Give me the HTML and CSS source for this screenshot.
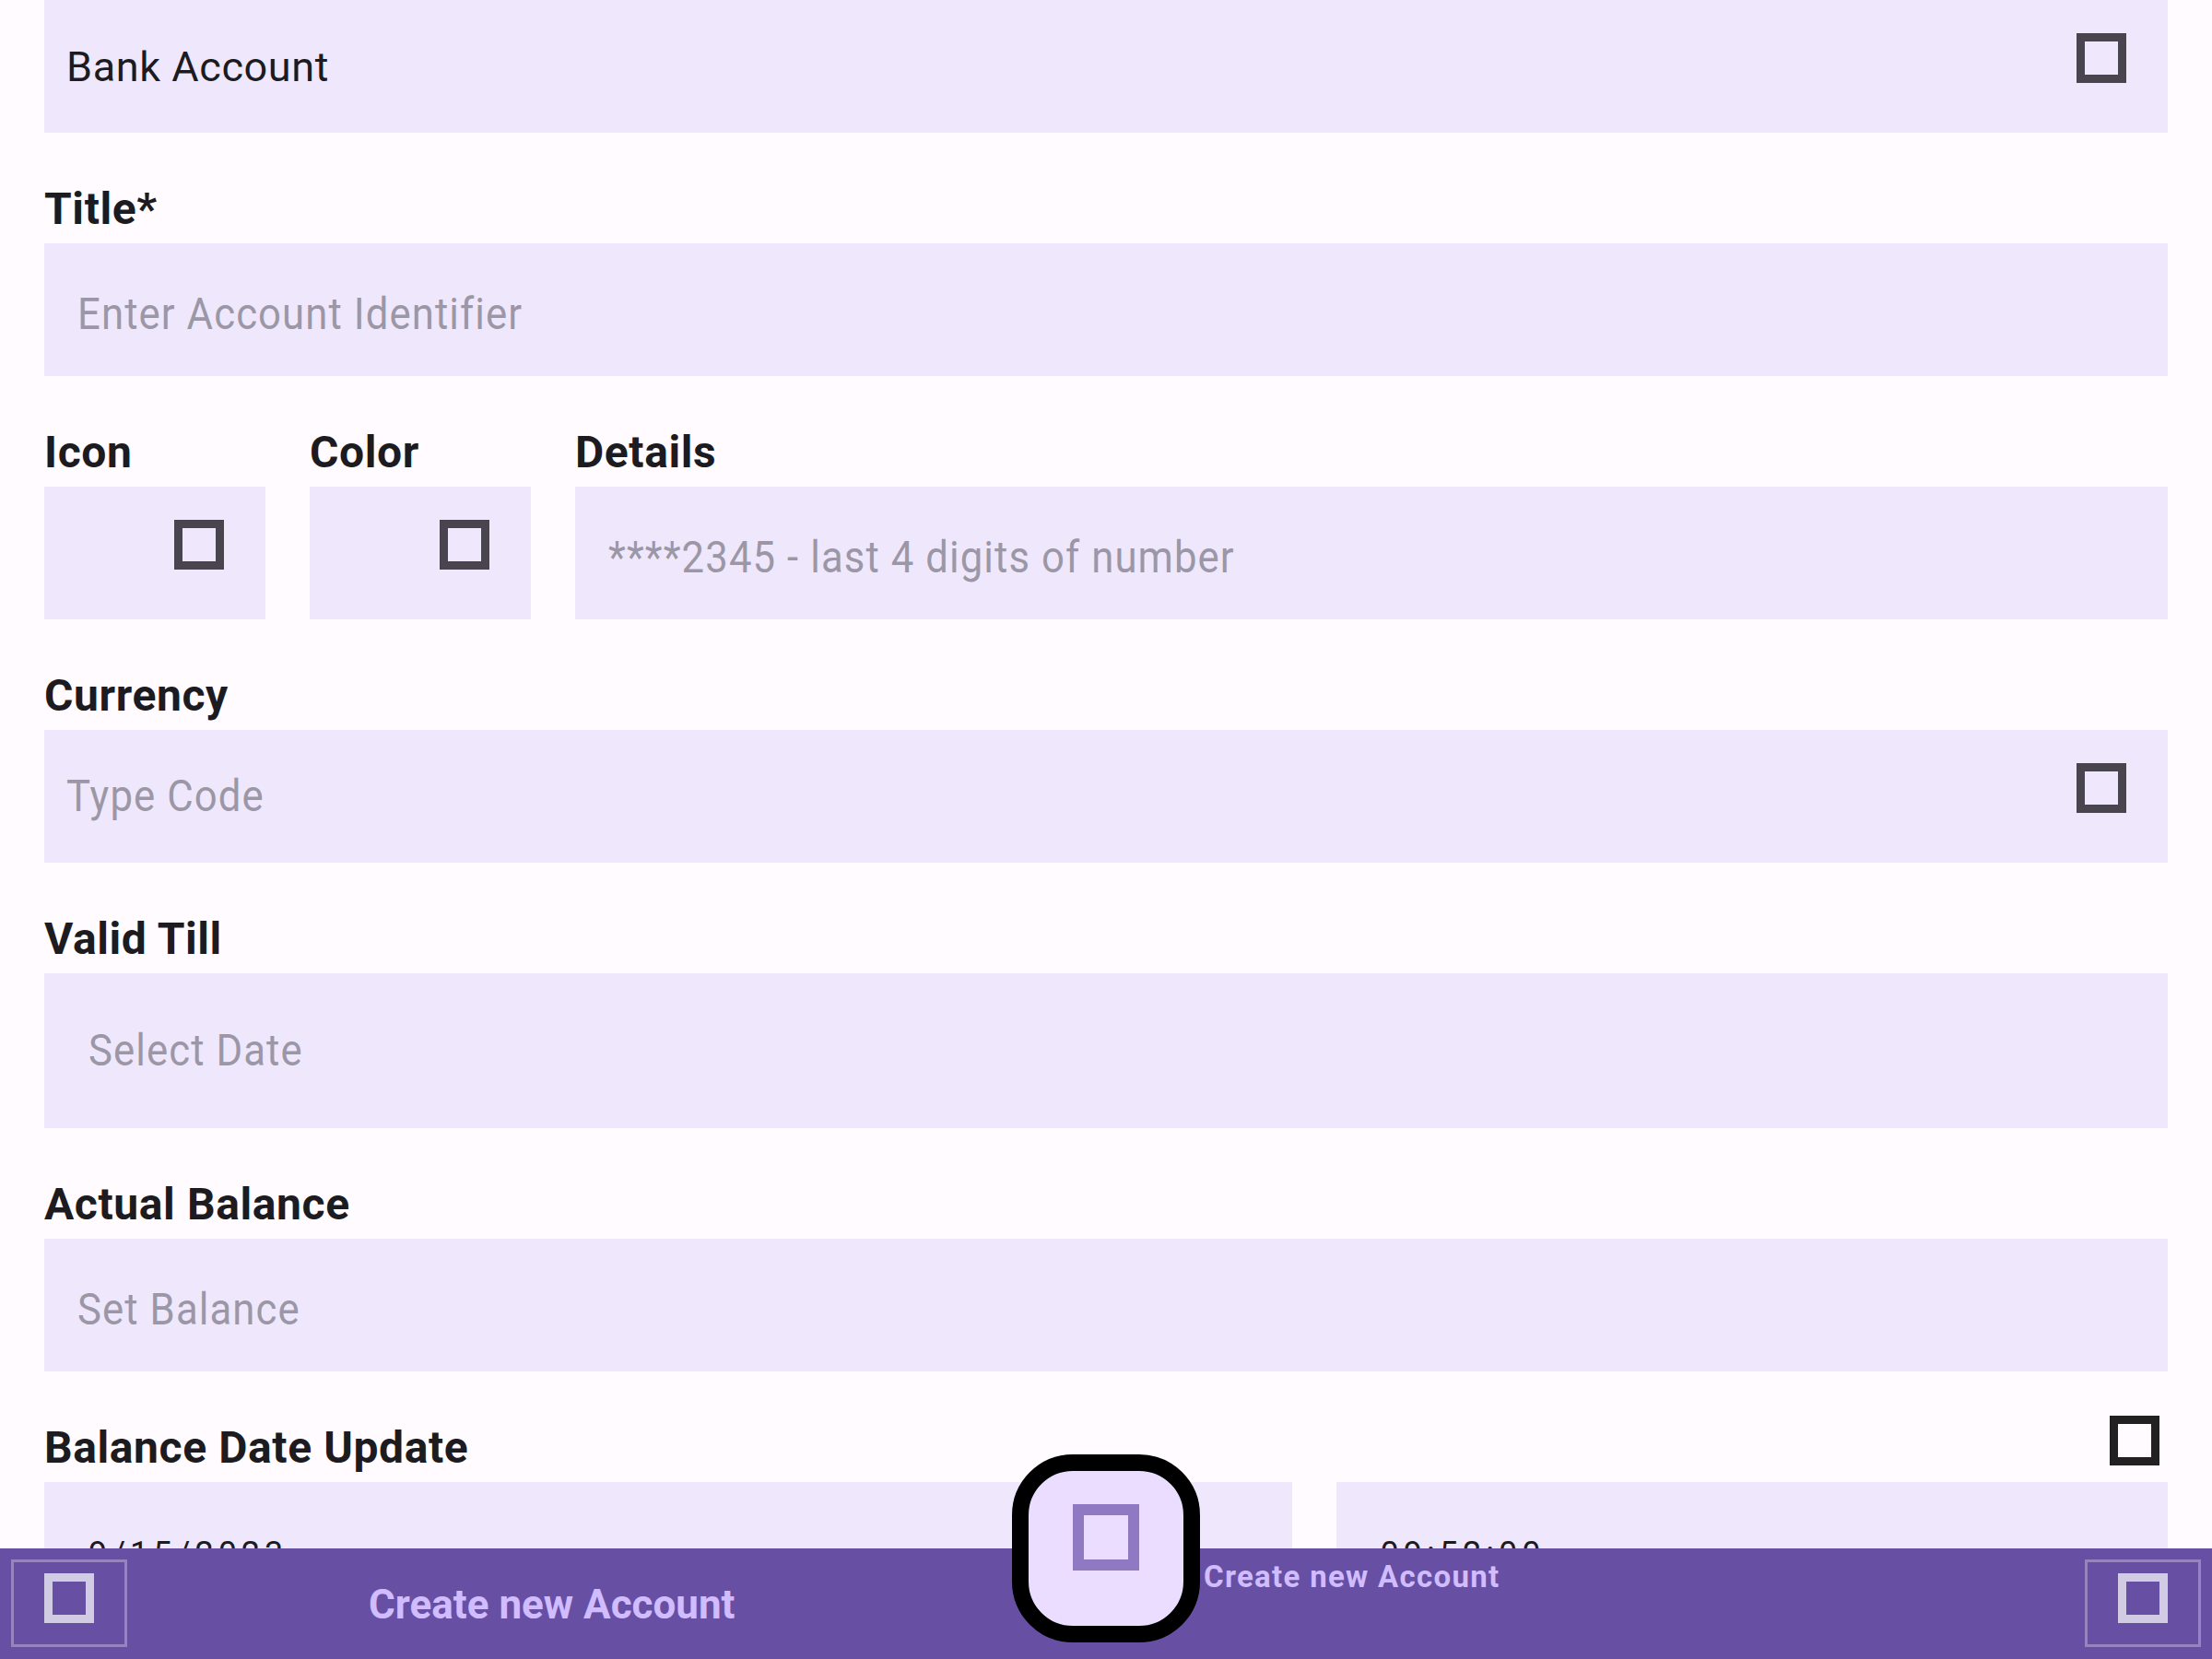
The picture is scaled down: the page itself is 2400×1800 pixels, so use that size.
FILE: index.html
```html
<!DOCTYPE html>
<html lang="en">
<head>
<meta charset="utf-8">
<title>Create new Account</title>
<link rel="stylesheet" href="styles.css">
</head>
<body>
<div class="screen">
  <main class="form">
    <div class="field field-type">
      <span class="value">Bank Account</span>
      <span class="ibox"><span class="glyph"></span></span>
    </div>

    <div class="label">Title*</div>
    <div class="field pad-36">
      <span class="placeholder">Enter Account Identifier</span>
    </div>

    <div class="row-three">
      <div class="col col-small">
        <div class="label">Icon</div>
        <div class="field field-pick">
          <span class="ibox"><span class="glyph"></span></span>
        </div>
      </div>
      <div class="col col-small">
        <div class="label">Color</div>
        <div class="field field-pick">
          <span class="ibox"><span class="glyph"></span></span>
        </div>
      </div>
      <div class="col col-grow">
        <div class="label">Details</div>
        <div class="field pad-36">
          <span class="placeholder">****2345 - last 4 digits of number</span>
        </div>
      </div>
    </div>

    <div class="label">Currency</div>
    <div class="field field-type">
      <span class="placeholder">Type Code</span>
      <span class="ibox"><span class="glyph"></span></span>
    </div>

    <div class="label">Valid Till</div>
    <div class="field field-tall pad-48">
      <span class="placeholder">Select Date</span>
    </div>

    <div class="label">Actual Balance</div>
    <div class="field pad-36">
      <span class="placeholder">Set Balance</span>
    </div>

    <div class="label label-row">
      <span>Balance Date Update</span>
      <span class="ibox ibox-plain"><span class="glyph glyph-dark"></span></span>
    </div>
    <div class="row-two">
      <div class="field field-tall field-datetime">
        <span class="dt">9/15/2023</span>
      </div>
      <div class="field field-tall field-datetime">
        <span class="dt">09:52:00</span>
      </div>
    </div>
  </main>

  <nav class="bar">
    <button class="bar-btn" type="button"><span class="glyph glyph-light"></span></button>
    <span class="bar-title">Create new Account</span>
    <div class="fab-group">
      <div class="fab"><span class="glyph glyph-fab"></span></div>
      <span class="fab-label">Create new Account</span>
    </div>
    <button class="bar-btn bar-btn-right" type="button"><span class="glyph glyph-light"></span></button>
  </nav>
</div>
</body>
</html>
```

FILE: styles.css
```css
html, body {
  margin: 0;
  padding: 0;
}

body {
  background: #fffbfe;
  font-family: Roboto, "Noto Sans", "Liberation Sans", sans-serif;
  color: #1c1b1f;
}

.screen {
  position: relative;
  width: 2400px;
  height: 1800px;
  overflow: hidden;
  background: #fffbfe;
}

.form {
  padding: 0 48px;
}

.field {
  box-sizing: border-box;
  height: 144px;
  background: #efe8fd;
  display: flex;
  align-items: center;
  padding: 0 36px;
}

.field-type {
  padding-left: 24px;
  justify-content: space-between;
}

.pad-36 {
  padding-left: 36px;
  padding-top: 10px;
}

.pad-48 { padding-left: 48px; }

.field-tall {
  height: 168px;
}

.field-pick {
  justify-content: flex-end;
}

.value {
  font-size: 45px;
  line-height: 45px;
  letter-spacing: 0.6px;
  color: #1c1b1f;
}

.placeholder {
  display: inline-block;
  font-size: 48px;
  line-height: 48px;
  letter-spacing: 1.2px;
  color: #9c97a6;
  white-space: nowrap;
  transform: scaleX(0.91);
  transform-origin: left center;
}

.label {
  margin-top: 55px;
  margin-bottom: 9px;
  font-size: 48px;
  line-height: 56px;
  font-weight: 700;
  letter-spacing: 0.6px;
  color: #1c1b1f;
}

.label-row {
  display: flex;
  justify-content: space-between;
  align-items: flex-start;
}

.ibox {
  width: 72px;
  height: 72px;
  display: flex;
  justify-content: center;
  align-items: flex-start;
  flex: none;
}

.ibox-plain {
  margin-top: -7px;
  height: 54px;
}

.glyph {
  display: block;
  box-sizing: border-box;
  width: 54px;
  height: 54px;
  border: 9px solid #49454f;
}

.glyph-dark {
  border-color: #212121;
}

.glyph-light {
  border-color: rgba(255, 255, 255, 0.7);
}

.glyph-fab {
  width: 72px;
  height: 72px;
  border: 12px solid #8e79c2;
}

.row-three {
  display: flex;
  gap: 48px;
}

.col-small {
  width: 240px;
  flex: none;
}

.col-grow {
  flex: 1;
}

.row-two {
  display: grid;
  grid-template-columns: 3fr 2fr;
  gap: 48px;
}

.field-datetime {
  align-items: flex-start;
  padding-left: 48px;
  padding-top: 60px;
}

.dt {
  font-size: 36px;
  line-height: 36px;
  letter-spacing: 5px;
  color: #1c1b1f;
}

/* bottom app bar overlays the scrolled form */
.bar {
  position: absolute;
  left: 0;
  right: 0;
  bottom: 0;
  height: 120px;
  background: #6750a4;
  display: flex;
  align-items: flex-start;
  padding: 12px;
  box-sizing: border-box;
}

.bar-btn {
  box-sizing: border-box;
  width: 126px;
  height: 95px;
  border: 3px solid rgba(255, 255, 255, 0.3);
  background: transparent;
  padding: 12px 0 0;
  margin: 0;
  display: flex;
  justify-content: center;
  align-items: flex-start;
  flex: none;
}

.bar-btn-right {
  margin-left: auto;
}

.bar-title {
  margin-left: 262px;
  margin-top: 27px;
  font-size: 44px;
  line-height: 44px;
  font-weight: 700;
  letter-spacing: 0;
  color: #d0bcff;
}

.fab-group {
  position: absolute;
  left: 1098px;
  top: -102px;
  display: flex;
  align-items: flex-start;
}

.fab {
  box-sizing: border-box;
  width: 204px;
  height: 204px;
  border: 18px solid #000;
  border-radius: 66px;
  background: #eaddff;
  display: flex;
  justify-content: center;
  align-items: flex-start;
  padding-top: 36px;
  flex: none;
}

.fab-label {
  margin-top: 116px;
  margin-left: 4px;
  font-size: 33px;
  line-height: 33px;
  font-weight: 700;
  letter-spacing: 1.3px;
  color: #d0bcff;
  white-space: nowrap;
}
```
